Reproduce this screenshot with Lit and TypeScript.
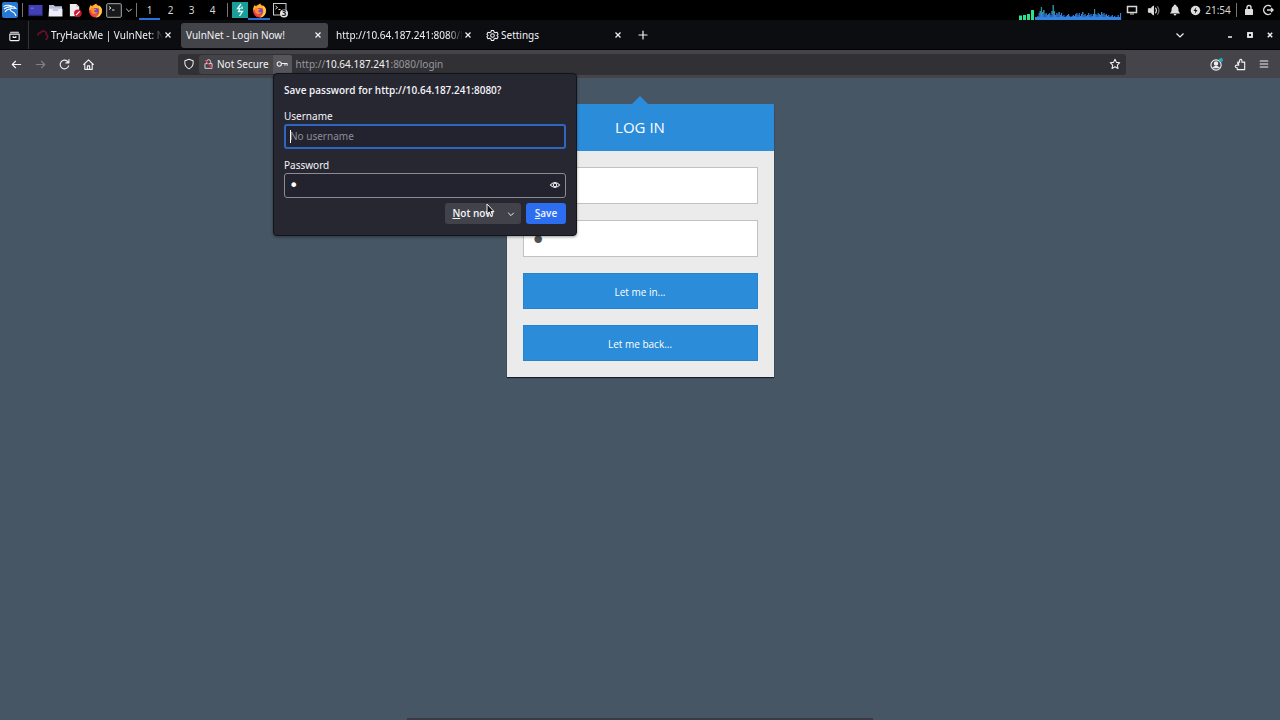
import { LitElement, html, css, svg } from "lit";
import { customElement } from "lit/decorators.js";

const firefox = html`<svg viewBox="0 0 16 16" width="15" height="15" aria-hidden="true">
  <circle cx="8" cy="8.5" r="6.8" fill="#f5532e"/>
  <path d="M1.2 8C1 5 2.200 3 3.200 1.800C3.300 3 4 3.700 5 4C6 2.500 7.500 1 9 .5C9 2 10.200 3 11.500 3.500L12 2.600C14 4 15.400 6.500 15 9.500C14 6 12 5.500 9 5.500L4 6.500Z" fill="#ffb52e"/>
  <path d="M11.500 3C14.500 5 15.500 8 14.500 11C13.500 14 11 15.500 8 15.500C11 13.500 12.500 11 12 8Z" fill="#ffc940"/>
  <path d="M1.500 6C2 12 6 15.500 11 14.800C5 16.500 .8 13 1.500 6Z" fill="#e0265c"/>
  <circle cx="7.800" cy="8.800" r="3.500" fill="#7a45c8"/>
  <path d="M3 5.500C4.500 4.800 6 5 7 6L9 6.600C8.500 7.600 7 7.500 6.500 8.500C7 10 9 10.300 10.500 9.500C9.500 12 5.500 12.500 4 10C3.300 8.800 3 7 3 5.500Z" fill="#ff8a2a"/></svg>`;

const cross = html`<svg viewBox="0 0 8 8" width="8" height="8" fill="none" stroke="currentColor" stroke-width="1.200" aria-hidden="true"><path d="M1.500 1.500L6.500 6.500M6.500 1.500L1.500 6.500"/></svg>`;

const chevron = (size: number) => html`<svg viewBox="0 0 10 10" width=${size} height=${size} fill="none" stroke="currentColor" stroke-width="1.200" aria-hidden="true"><path d="M1.500 3.500L5 7L8.500 3.500"/></svg>`;

const line = (paths: unknown, size = 14) => html`<svg viewBox="0 0 14 14" width=${size} height=${size} fill="none" stroke="currentColor" stroke-width="1.200" stroke-linecap="round" stroke-linejoin="round" aria-hidden="true">${paths}</svg>`;

const cpuLoad = [2, 3, 4, 7, 9, 13, 8, 10, 6, 7, 5, 6, 7, 5, 9, 15, 9, 5, 7, 6, 8, 5, 7, 4, 5, 3, 4, 5, 6, 4, 3, 4, 5, 4, 6, 7, 5, 7, 4, 6, 8, 5, 6, 4, 5, 7, 5, 6, 4, 6, 11, 6, 5, 7, 6, 5, 8, 6, 7, 5, 6, 4, 5, 3, 4, 5, 3, 4, 3, 2, 5, 3, 7];

@customElement("desktop-panel")
export class DesktopPanel extends LitElement {
  static styles = css`
    :host { display: flex; justify-content: space-between; height: 20px; padding-right: 1px; background: #000; color: #d6d6d6; font: 10px/20px "Noto Sans", sans-serif; }
    .group { display: flex; }
    button { display: flex; align-items: center; justify-content: center; width: 20px; height: 20px; padding: 0; border: 0; background: none; color: inherit; font: inherit; box-sizing: border-box; }
    svg { display: block; flex: none; }
    .narrow { width: 16px; }
    .medium { width: 18px; }
    .slim { width: 11px; }
    .space { width: 21px; }
    .wide { width: 22px; }
    .active { border-bottom: 2px solid #2d6fd8; border-top: 2px solid transparent; }
    .sep { display: flex; justify-content: center; align-items: center; width: 5px; }
    .roomy { width: 9px; }
    .sep::before { content: ""; width: 1px; height: 14px; background: #77737a; }
    .clock { width: 28px; text-align: center; }
    .graph { display: flex; align-items: flex-end; }
  `;

  render() {
    return html`
      <div class="group">
        <button aria-label="Applications"><svg viewBox="0 0 16 16" width="16" height="16"><rect width="16" height="16" rx="2" fill="#2578d6"/><path d="M1.500 4.500C4 3 7 3 9.500 4M2 7C4.500 5 7 4.500 10 5M9.500 4C11.500 4 13 5 14 6.500L11.500 6C9 6 7.500 7 8.500 8.500C9.500 10 12.500 9 14 14M3 10C4.500 7.500 6.500 7 8 7" fill="none" stroke="#fff" stroke-width="1.100"/></svg></button>
        <span class="sep"></span>
        <button aria-label="Show desktop"><svg viewBox="0 0 16 14" width="15" height="13"><rect x=".5" y="1" width="15" height="12" fill="#433fb5"/><path d="M.5 11.500H15.500V13H.5Z" fill="#252b78"/><path d="M3 4.500H6" stroke="#8889e6"/></svg></button>
        <button aria-label="Files"><svg viewBox="0 0 16 14" width="15" height="13"><path d="M1 1H6L7.500 2.500H15V13H1Z" fill="#b9bcd7"/><path d="M1 5H15.500V13.500H.5Z" fill="#ecedf7"/><path d="M5 6.500H11" stroke="#9297c5"/></svg></button>
        <button aria-label="Text editor"><svg viewBox="0 0 16 16" width="15" height="15"><path d="M2 1H9L12 4V14H2Z" fill="#eee"/><path d="M9 1V4H12" fill="#bbb"/><circle cx="10.500" cy="11" r="4" fill="#cf1734"/><path d="M8.500 13L12.500 9" stroke="#fff" stroke-width="1.200"/></svg></button>
        <button aria-label="Firefox">${firefox}</button>
        <button class="medium" aria-label="Terminal"><svg viewBox="0 0 16 15" width="16" height="15"><rect x=".7" y=".7" width="14.600" height="13.600" rx="1" fill="#17191b" stroke="#aaa"/><path d="M3 3.500L5 5L3 6.500M6 7H8.500" fill="none" stroke="#ddd"/></svg></button>
        <button class="slim" aria-label="More terminals">${chevron(8)}</button>
        <span class="sep"></span>
        <button class="space active">1</button><button class="space">2</button><button class="space">3</button><button class="space">4</button>
        <span class="sep roomy"></span>
        <button class="narrow" aria-label="Burp Suite"><svg viewBox="0 0 16 16" width="16" height="16"><rect width="16" height="16" fill="#1a9e9a"/><path d="M9 2L5.500 6.500H8L6.500 9.500H10.500L7.500 14M10 4.500V7" fill="none" stroke="#e8ffff" stroke-width="1.300"/></svg></button>
        <button class="wide active" aria-label="Firefox window">${firefox}</button>
        <button aria-label="Terminal windows, 3"><svg viewBox="0 0 16 16" width="16" height="16"><rect x="1.500" y="1.500" width="12.500" height="11.500" fill="#050505" stroke="#ccc"/><path d="M3.500 4L5.500 5.500L3.500 7M6.500 7.500H8.500" fill="none" stroke="#ddd"/><circle cx="12" cy="11.500" r="4" fill="#e4e4e4"/><text x="12" y="14.200" font-size="8" font-weight="700" text-anchor="middle" fill="#222">3</text></svg></button>
      </div>
      <div class="group">
        <span class="graph"><svg viewBox="0 0 104 20" width="104" height="20" aria-hidden="true">
          <path d="M1 20V15.500H4V20ZM5 20V15H8V20ZM9 20V14H12V20ZM13 20V10H16V20Z" fill="#2ee08c"/>
          <rect x="17" y="17" width="86" height="3" fill="#3583e0"/>
          ${cpuLoad.map((v, i) => svg`<rect x=${17 + i * 1.18} y=${20 - v} width="1.180" height=${v} fill="#3583e0"/>${v > 7 ? svg`<rect x=${17 + i * 1.18} y=${20 - v} width="1" height=${v - 6} fill="#2c9488"/>` : ""}`)}
        </svg></span>
        <button aria-label="Display"><svg viewBox="0 0 12 10" width="12" height="10"><path d="M1.500 1.500H10.500V7.500H1.500Z" fill="none" stroke="#d6d6d6" stroke-width="1.500"/><path d="M4 9H8" stroke="#d6d6d6"/></svg></button>
        <button class="wide" aria-label="Volume"><svg viewBox="0 0 14 14" width="13" height="13" fill="none" stroke="#ddd"><path d="M1.500 5H4L7 2V12L4 9H1.500Z" fill="#ddd"/><path d="M9 4C10.500 5.500 10.500 8.500 9 10" stroke-width="1.300"/><path d="M11 2.500C13.500 5 13.500 9 11 11.500" stroke="#777" stroke-width="1.300"/></svg></button>
        <button class="wide" aria-label="Notifications"><svg viewBox="0 0 12 12" width="12" height="12" fill="#ddd"><path d="M6 .5C7 .5 7 1.500 7.500 2C9.500 3 9.500 5 9.500 7L11 9.500H1L2.500 7C2.500 5 2.500 3 4.500 2C5 1.500 5 .5 6 .5ZM4.500 10H7.500Q7 11.500 6 11.500Q5 11.500 4.500 10Z"/></svg></button>
        <button class="medium" aria-label="Power"><svg viewBox="0 0 12 12" width="11" height="11"><circle cx="6" cy="6" r="5.200" fill="#ddd"/><path d="M6.800 2.500L3.800 6.600H5.800L5.200 9.500L8.200 5.400H6.200Z" fill="#111"/></svg></button>
        <span class="clock">21:54</span>
        <span class="sep roomy"></span>
        <button class="narrow" aria-label="Lock"><svg viewBox="0 0 10 12" width="10" height="12"><path d="M3 5V3.500Q3 1.500 5 1.500Q7 1.500 7 3.500V5" fill="none" stroke="#ddd" stroke-width="1.400"/><rect x="1" y="5" width="8" height="6" rx=".5" fill="#ddd"/></svg></button>
        <button class="wide" aria-label="Log out"><svg viewBox="0 0 12 12" width="12" height="12" fill="none" stroke="#ddd" stroke-width="1.400"><path d="M9 2.500A4.500 4.500 0 1 0 9 9.500M5 6H11M9 4L11 6L9 8"/></svg></button>
      </div>`;
  }
}

@customElement("browser-chrome")
export class BrowserChrome extends LitElement {
  static styles = css`
    :host { display: block; color: #f2f2f4; font: 10px/16px "Noto Sans", sans-serif; }
    button { display: flex; align-items: center; justify-content: center; flex: none; padding: 0; border: 0; background: none; color: inherit; font: inherit; }
    svg { display: block; flex: none; }
    .tabs { display: flex; align-items: center; height: 29px; padding-top: 1px; background: #0c0d11; box-sizing: border-box; }
    .view { width: 29px; height: 28px; border-right: 1px solid #35353a; }
    .strip { display: flex; gap: 3px; padding-left: 2px; }
    .tab { display: flex; align-items: center; width: 147px; height: 25px; padding: 0 6px 0 5px; box-sizing: border-box; border-radius: 3px; }
    .selected { background: #43434a; }
    .title { display: flex; justify-content: flex-start; flex: 1; min-width: 0; gap: 2px; text-align: left; }
    .label { white-space: nowrap; }
    .fade { flex: 1; min-width: 0; overflow: hidden; mask-image: linear-gradient(to right, #000 88%, transparent); }
    .close { width: 9px; height: 16px; }
    .add { width: 30px; height: 25px; }
    .window { display: flex; margin-left: auto; }
    .window button { width: 20px; height: 25px; }
    .list { margin-right: 30px; }
    .nav { display: flex; align-items: center; height: 29px; background: #44444a; padding: 0 4px; box-sizing: border-box; border-top: 1px solid #020203; }
    .nav > button { width: 24px; height: 24px; }
    .dim { color: #808086; }
    .bar { display: flex; align-items: center; flex: 1; min-width: 0; margin: 0 78px; height: 21px; background: #303035; border-radius: 3px; }
    .shield { width: 21px; height: 20px; }
    .site { height: 19px; gap: 3px; padding: 0 4px; background: #434348; border-radius: 3px 0 0 3px; }
    .key { width: 19px; height: 19px; background: #55555b; border-radius: 0 2px 2px 0; }
    .url { flex: 1; padding-left: 4px; white-space: nowrap; color: #98989e; }
    .host { color: #f4f4f6; }
    .star { width: 22px; height: 20px; }
  `;

  render() {
    return html`
      <div class="tabs">
        <button class="view" aria-label="Firefox View">${line(svg`<path d="M2 5.500H12V11.500Q12 12.500 11 12.500H3Q2 12.500 2 11.500ZM2.800 3.500H11.200M5.500 8V9H8.500V8"/>`, 13)}</button>
        <div class="strip">
          <div class="tab"><button class="title"><svg viewBox="0 0 14 14" width="13" height="13" fill="none" stroke="#6b1029" stroke-width="1.800"><path d="M2 7Q2 4 5 4Q6 1.500 9 2.500Q12 3.500 11 6Q13 7 12.500 9L10.500 12"/></svg><span class="label fade">TryHackMe | VulnNet: No</span></button><button class="close" aria-label="Close tab">${cross}</button></div>
          <div class="tab selected"><button class="title"><span class="label">VulnNet - Login Now!</span></button><button class="close" aria-label="Close tab">${cross}</button></div>
          <div class="tab"><button class="title"><span class="label fade">http://10.64.187.241:8080/lo</span></button><button class="close" aria-label="Close tab">${cross}</button></div>
          <div class="tab"><button class="title"><svg viewBox="0 0 14 14" width="13" height="13" fill="none" stroke="currentColor" stroke-width="1.100" stroke-linejoin="round"><path d="M5.800 1.500H8.200L8.600 3.200L10.200 4.100L11.900 3.600L13 5.700L11.700 7L13 8.300L11.900 10.400L10.200 9.900L8.600 10.800L8.200 12.500H5.800L5.400 10.800L3.800 9.900L2.100 10.400L1 8.300L2.300 7L1 5.700L2.100 3.600L3.800 4.100L5.400 3.200Z"/><circle cx="7" cy="7" r="2"/></svg><span class="label">Settings</span></button><button class="close" aria-label="Close tab">${cross}</button></div>
        </div>
        <button class="add" aria-label="New tab">${line(svg`<path d="M7 3V11M3 7H11"/>`)}</button>
        <div class="window">
          <button class="list" aria-label="List all tabs">${chevron(10)}</button>
          <button aria-label="Minimize"><svg viewBox="0 0 8 8" width="8" height="8"><path d="M2 6H6" stroke="#eee" stroke-width="1.500"/></svg></button>
          <button aria-label="Maximize"><svg viewBox="0 0 8 8" width="8" height="8"><rect x="2" y="2" width="4" height="4" fill="none" stroke="#eee" stroke-width="1.800"/></svg></button>
          <button aria-label="Close"><svg viewBox="0 0 8 8" width="8" height="8"><path d="M1.800 1.800L6.200 6.200M6.200 1.800L1.800 6.200" stroke="#eee" stroke-width="1.500"/></svg></button>
        </div>
      </div>
      <div class="nav">
        <button aria-label="Back">${line(svg`<path d="M11.500 7H2.500M6 3.500L2.500 7L6 10.500"/>`, 13)}</button>
        <button class="dim" aria-label="Forward">${line(svg`<path d="M2.500 7H11.500M8 3.500L11.500 7L8 10.500"/>`, 13)}</button>
        <button aria-label="Reload">${line(svg`<path d="M11.500 8.500A4.700 4.700 0 1 1 10.800 4.200M11.800 1.800V5.200H8.400"/>`, 13)}</button>
        <button aria-label="Home">${line(svg`<path d="M1.800 7L7 2L12.200 7M3 6.500V12.200H11V6.500M5.800 12V8.500H8.200V12"/>`, 13)}</button>
        <div class="bar">
          <button class="shield" aria-label="Protections">${line(svg`<path d="M7 1.500L11.800 3.200V6.500Q11.500 10.500 7 12.700Q2.500 10.500 2.200 6.500V3.200Z"/>`, 12)}</button>
          <button class="site"><svg viewBox="0 0 14 14" width="11" height="12" fill="none" stroke="#ddd" stroke-width="1.200"><path d="M3 6.500H11.500V12.500H2.500V6.500M4.500 6V4Q5 1.500 7.200 1.500Q9.500 1.500 9.800 4V6"/><path d="M2.500 2L12.500 12.500" stroke="#e9375f" stroke-width="1.500"/></svg>Not Secure</button>
          <button class="key" aria-label="Saved login">${line(svg`<circle cx="3.800" cy="7" r="2.500"/><path d="M6.500 6.500H13V8.500M10.500 6.500V8.500"/>`, 12)}</button>
          <div class="url" role="textbox" aria-label="Address">http://<span class="host">10.64.187.241</span>:8080/login</div>
          <button class="star" aria-label="Bookmark">${line(svg`<path d="M7 1.500L8.700 5.100L12.600 5.500L9.700 8.200L10.500 12.200L7 10.200L3.500 12.200L4.300 8.200L1.400 5.500L5.300 5.100Z"/>`, 12)}</button>
        </div>
        <button aria-label="Account"><svg viewBox="0 0 14 14" width="13" height="13" fill="none" stroke="#eee" stroke-width="1.200"><circle cx="6.500" cy="7.500" r="5.500"/><circle cx="6.500" cy="6" r="1.800" fill="#eee"/><path d="M3.500 10.500Q6.500 7.500 9.500 10.500Z" fill="#eee"/><circle cx="11.800" cy="2.200" r="2.200" fill="#1faebd" stroke="none"/></svg></button>
        <button aria-label="Extensions">${line(svg`<path d="M4 4.500H6V3Q6 1.500 7.300 1.500Q8.500 1.500 8.500 3V4.500H11.500V12.500H3.500V10.500H2.800Q1.300 10.300 1.300 9Q1.500 7.700 3 7.700H5V6H4Z"/>`, 13)}</button>
        <button aria-label="Menu">${line(svg`<path d="M2.500 3.500H11.500M2.500 7H11.500M2.500 10.500H11.500"/>`, 12)}</button>
      </div>`;
  }
}

@customElement("save-login")
export class SaveLogin extends LitElement {
  static styles = css`
    :host { display: block; width: 304px; padding: 9px 10px 11px; box-sizing: border-box; background: #272732; border: 1px solid #13131b; border-radius: 4px; box-shadow: 0 1px 3px #0006; color: #f4f4f8; font: 10px/15px "Noto Sans", sans-serif; }
    h2 { margin: 0 0 11px; font: 600 10px/15px "Open Sans", sans-serif; }
    label { display: block; }
    .field { position: relative; display: flex; margin-bottom: 9px; }
    .last { margin-bottom: 5px; }
    input { width: 100%; height: 25px; box-sizing: border-box; padding: 0 4px; background: #23232f; border: 1px solid #8b8b95; border-radius: 3px; color: #fff; font: inherit; outline: 0; }
    .focused { border: 2px solid #2f66c4; padding: 0 4px 2px; }
    .secret { font: 16px "DejaVu Sans", sans-serif; }
    input::placeholder { color: #8d8d98; opacity: 1; }
    .caret { position: absolute; left: 6px; top: 6px; width: 1px; height: 13px; background: #fff; }
    button { display: flex; align-items: center; justify-content: center; padding: 0; border: 0; background: none; color: inherit; font: inherit; }
    .eye { position: absolute; right: 4px; top: 5px; width: 14px; height: 14px; }
    .actions { display: flex; justify-content: flex-end; gap: 5px; }
    .actions button { height: 21px; font: 600 10px/15px "Open Sans", sans-serif; }
    .split { display: flex; background: #42424a; border-radius: 3px; }
    .later { width: 56px; }
    .more { width: 20px; }
    .actions .save { width: 40px; background: #2b6ef2; border-radius: 3px; }
    u { text-underline-offset: 1px; }
  `;

  render() {
    return html`
      <h2>Save password for http://10.64.187.241:8080?</h2>
      <label for="name">Username</label>
      <div class="field"><input id="name" class="focused" placeholder="No username"><span class="caret"></span></div>
      <label for="pass">Password</label>
      <div class="field last"><input id="pass" class="secret" type="password" value="a">
        <button class="eye" aria-label="Show password">${line(svg`<path d="M1.500 7Q7 1 12.500 7Q7 13 1.500 7Z"/><circle cx="7" cy="7" r="2"/>`, 12)}</button></div>
      <div class="actions">
        <div class="split"><button class="later"><span><u>N</u>ot now</span></button><button class="more" aria-label="More options">${chevron(8)}</button></div>
        <button class="save"><span><u>S</u>ave</span></button>
      </div>`;
  }
}

@customElement("login-card")
export class LoginCard extends LitElement {
  static styles = css`
    :host { display: block; width: 267px; background: #ebebeb; box-shadow: 0 1px 1px #17202a; font: 10px/16px "Open Sans", sans-serif; }
    h1 { position: relative; margin: 0; background: #2b8cd9; color: #fff; text-align: center; font-size: 15px; line-height: 47px; font-weight: 400; }
    h1::before { content: ""; position: absolute; left: 50%; bottom: 100%; margin-left: -8px; border: 8px solid transparent; border-top-width: 0; border-bottom-color: #2b8cd9; }
    form { display: flex; flex-direction: column; gap: 16px; padding: 16px; }
    input { width: 100%; height: 37px; padding: 2px 7px 0; box-sizing: border-box; background: #fff; border: 1px solid #c2c2c2; color: #505050; font: 26px "DejaVu Sans", sans-serif; }
    button { height: 36px; padding: 1px 0 0; border: 1px solid #2783cd; background: #2b8cd9; color: #fff; font: inherit; }
  `;

  render() {
    return html`
      <h1>LOG IN</h1>
      <form @submit=${(e: Event) => e.preventDefault()}>
        <input aria-label="Username">
        <input aria-label="Password" type="password" value="a">
        <button>Let me in...</button>
        <button type="button">Let me back...</button>
      </form>`;
  }
}

@customElement("app-root")
export class AppRoot extends LitElement {
  static styles = css`
    :host { display: flex; flex-direction: column; height: 100vh; overflow: hidden; background: #465664; }
    main { position: relative; flex: 1; display: flex; flex-direction: column; align-items: center; justify-content: space-between; padding-top: 26px; }
    .popup { position: absolute; left: 273px; top: -5px; }
    .cursor { position: absolute; left: 486px; top: 125px; }
    .dock { width: 466px; height: 2px; background: #373b45; }
  `;

  render() {
    return html`
      <desktop-panel></desktop-panel>
      <browser-chrome></browser-chrome>
      <main>
        <login-card></login-card>
        <div class="dock"></div>
        <save-login class="popup" role="dialog" aria-label="Save password"></save-login>
        <svg class="cursor" viewBox="0 0 9 14" width="9" height="14" aria-hidden="true"><path d="M1 1V11L3.300 9L5 13L6.500 12.300L5 8.500H8Z" fill="#16161c" stroke="#eee"/></svg>
      </main>`;
  }
}
